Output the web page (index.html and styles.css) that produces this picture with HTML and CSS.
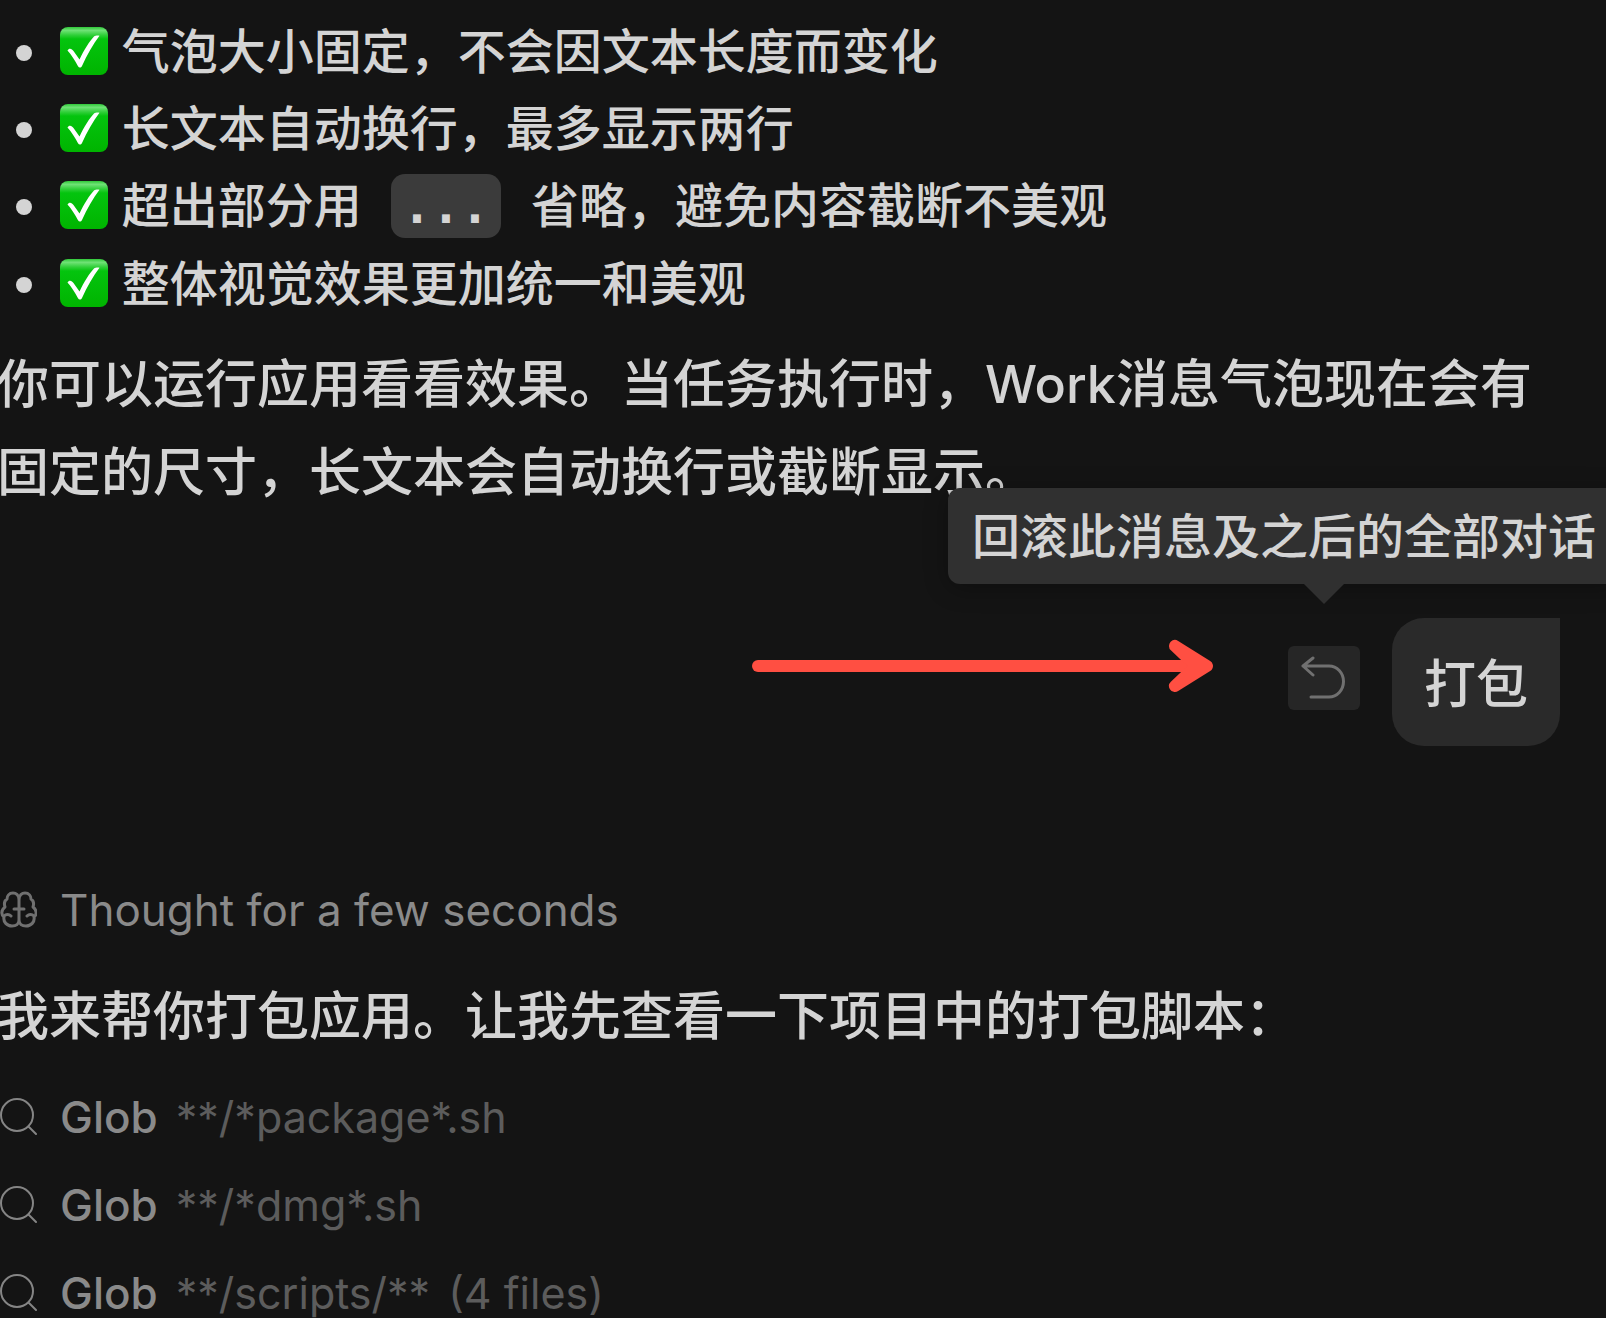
FILE: index.html
```
<!DOCTYPE html>
<html lang="zh-CN">

<head>
    <meta charset="UTF-8" />
    <meta name="viewport" content="width=device-width, initial-scale=1.0" />
    <title>Chat</title>
    <link rel="stylesheet" href="styles.css">
</head>

<body>
    <!-- Shared icons -->
    <svg class="defs" aria-hidden="true">
        <defs>
            <linearGradient id="green" x1="0" y1="0" x2="0" y2="1">
                <stop offset="0" stop-color="#2fc838" />
                <stop offset="0.07" stop-color="#6fe276" />
                <stop offset="0.17" stop-color="#2fcf38" />
                <stop offset="0.25" stop-color="#04c40e" />
                <stop offset="1" stop-color="#00b400" />
            </linearGradient>
        </defs>
        <symbol id="check" viewBox="0 0 48 48">
            <rect width="48" height="48" rx="8" fill="url(#green)" />
            <path d="M7.500 23.500C9 20.500 12 21.500 13.500 24L19.500 32.500C24 23 29.500 14 34 9.500C35.500 8.300 38.500 8.300 39.500 8.800C33 17.500 27 28 22 39C21 41 19 41 18 39.300C15 33.500 11.500 28 7.500 23.500Z" fill="#fff" />
        </symbol>
        <symbol id="search" viewBox="0 0 40 40">
            <circle cx="20" cy="18" r="16" />
            <path d="M32 30L39 37" />
        </symbol>
    </svg>

    <main class="chat">
        <ul class="results">
            <li><svg class="check" role="img" aria-label="✅"><use href="#check" /></svg> 气泡大小固定，不会因文本长度而变化</li>
            <li><svg class="check" role="img" aria-label="✅"><use href="#check" /></svg> 长文本自动换行，最多显示两行</li>
            <li><svg class="check" role="img" aria-label="✅"><use href="#check" /></svg> 超出部分用 <code>...</code> 省略，避免内容截断不美观</li>
            <li><svg class="check" role="img" aria-label="✅"><use href="#check" /></svg> 整体视觉效果更加统一和美观</li>
        </ul>
        <p class="text">你可以运行应用看看效果。当任务执行时，Work消息气泡现在会有固定的尺寸，长文本会自动换行或截断显示。</p>

        <div class="user-row">
            <button class="rollback" type="button" aria-labelledby="rollbackTip">
                <svg class="undo" viewBox="0 0 48 44">
                    <path d="M13 2L3 10L13 19M3 10H29A14.500 15.500 0 0 1 29 41H11" />
                </svg>
                <span class="tooltip" id="rollbackTip" role="tooltip">回滚此消息及之后的全部对话</span>
                <svg class="pointer" viewBox="0 0 462 56">
                    <path d="M6 28H452" />
                    <path class="head" d="M423 8L455 28L423 48L444 28Z" />
                </svg>
            </button>
            <div class="bubble">打包</div>
        </div>

        <div class="step">
            <svg class="icon brain" viewBox="0 0 40 40">
                <path d="M22 10C22 5 19 3 16 3C12 3 10 6 10 9C7 11 7 14 8 17C4 20 4 25 7 27C6 32 10 36 15 36C19 36 22 34 22 30ZM22 10C22 5 25 3 28 3C32 3 34 6 34 9C37 11 37 14 36 17C40 20 40 25 37 27C38 32 34 36 29 36C25 36 22 34 22 30ZM17 19H27M7 26C9 24 12 24 14 26M37 26C35 24 32 24 30 26" />
            </svg>
            <span>Thought for a few seconds</span>
        </div>
        <p class="text">我来帮你打包应用。让我先查看一下项目中的打包脚本：</p>

        <div class="step">
            <svg class="icon"><use href="#search" /></svg>
            <span class="tool">Glob</span>
            <span class="arg">**/*package*.sh</span>
        </div>
        <div class="step">
            <svg class="icon"><use href="#search" /></svg>
            <span class="tool">Glob</span>
            <span class="arg">**/*dmg*.sh</span>
        </div>
        <div class="step">
            <svg class="icon"><use href="#search" /></svg>
            <span class="tool">Glob</span>
            <span class="arg">**/scripts/**</span>
            <span class="arg">(4 files)</span>
        </div>
    </main>
</body>

</html>
```
FILE: styles.css
```
* {
    box-sizing: border-box;
}

html,
body {
    margin: 0;
    padding: 0;
    height: 100vh;
    overflow: hidden;
    background: #141414;
    color: #d4d4d4;
    font-family: Inter, "Noto Sans CJK SC", sans-serif;
    font-weight: 500;
}

.defs {
    position: absolute;
    width: 0;
    height: 0;
}

.chat {
    margin-left: -3px;
    padding: 13px 46px 0 0;
}

.results {
    list-style: none;
    margin: 0;
    padding: 0 0 0 63px;
    font-size: 48px;
    line-height: 77px;
}

.results li::before {
    content: "";
    float: left;
    width: 16px;
    height: 16px;
    margin: 32px 0 0 -44px;
    border-radius: 50%;
    background: #d4d4d4;
}

.check {
    width: 48px;
    height: 48px;
    margin-right: 1px;
    vertical-align: -6px;
}

code {
    margin: 0 17px 0 16px;
    padding: 4px 12px;
    border-radius: 14px;
    background: #3b3b3b;
    font-family: "DejaVu Sans Mono", monospace;
    font-size: 48px;
    font-weight: 700;
}

.text {
    margin: 19px 0 0;
    font-size: 52px;
    line-height: 88px;
}

.user-row {
    display: flex;
    justify-content: flex-end;
    align-items: center;
    gap: 32px;
    margin: 101px 0 120px;
}

.rollback {
    position: relative;
    display: flex;
    justify-content: center;
    align-items: center;
    width: 72px;
    height: 64px;
    margin-bottom: 8px;
    padding: 0;
    border: none;
    border-radius: 6px;
    background: #262626;
    color: #d4d4d4;
    font-family: inherit;
    cursor: pointer;
}

.undo {
    width: 48px;
    height: 44px;
    fill: none;
    stroke: #707070;
    stroke-width: 3;
    stroke-linecap: round;
    stroke-linejoin: round;
}

.tooltip {
    position: absolute;
    bottom: 126px;
    left: -340px;
    padding: 2px 24px 0;
    border-radius: 12px;
    background: #303030;
    box-shadow: 0 4px 24px rgba(0, 0, 0, 0.3);
    font-size: 48px;
    font-weight: 500;
    line-height: 94px;
    white-space: nowrap;
}

.tooltip::after {
    content: "";
    position: absolute;
    top: 100%;
    left: 356px;
    border: 20px solid transparent;
    border-top-color: #303030;
    border-bottom: none;
}

/* Red arrow pointing at the rollback button */
.pointer {
    position: absolute;
    right: 146px;
    top: -8px;
    width: 462px;
    height: 56px;
    fill: none;
    stroke: #ff4f42;
    stroke-width: 12;
    stroke-linecap: round;
    stroke-linejoin: round;
}

.pointer .head {
    fill: #ff4f42;
}

.bubble {
    padding: 6px 32px 0;
    border-radius: 32px 0 32px 32px;
    background: #2a2a2a;
    font-size: 52px;
    line-height: 122px;
}

.step {
    display: flex;
    align-items: center;
    height: 88px;
    color: #8a8a8a;
    font-size: 44px;
    font-weight: 400;
    white-space: nowrap;
}

.text + .step {
    margin-top: 12px;
}

.icon {
    width: 40px;
    height: 40px;
    margin-right: 23px;
    fill: none;
    stroke: #858585;
    stroke-width: 2;
    stroke-linecap: round;
    stroke-linejoin: round;
}

.brain {
    stroke: #707070;
    stroke-width: 3;
}

.tool {
    font-weight: 500;
}

.arg {
    margin-left: 18px;
    color: #5c5c5c;
    font-size: 43px;
}
```
